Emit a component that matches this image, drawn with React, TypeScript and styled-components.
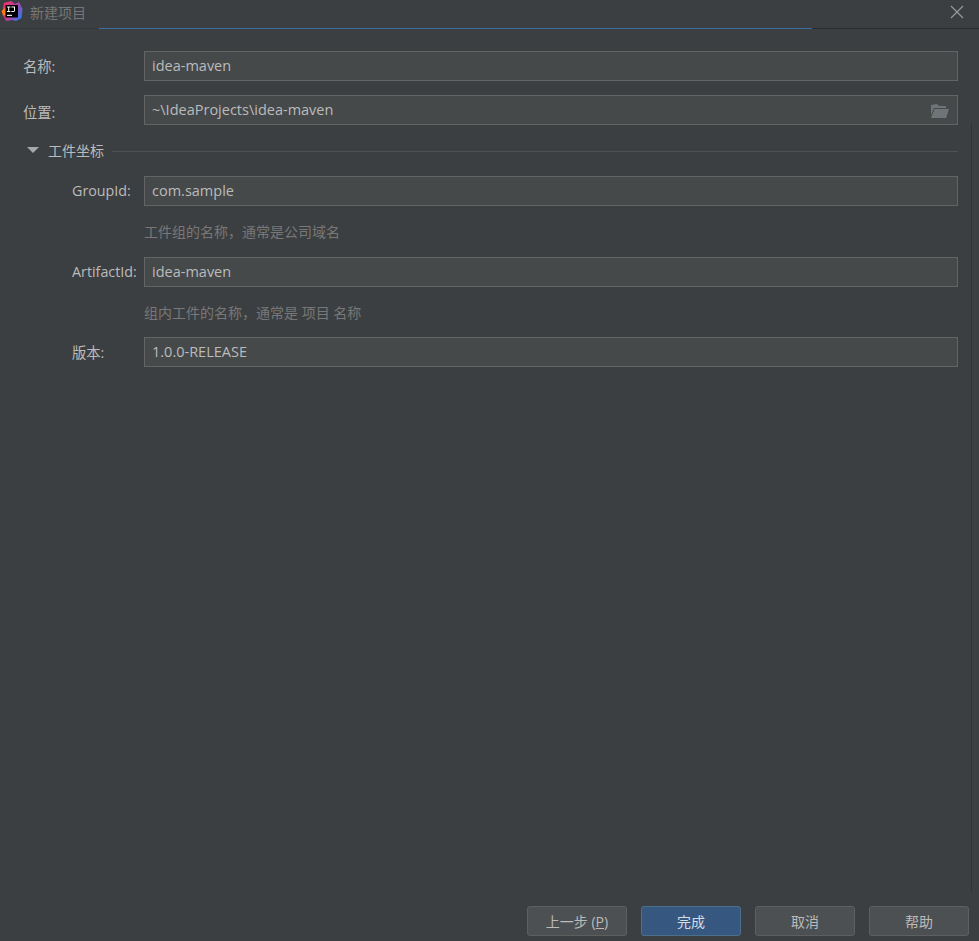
import styled, { createGlobalStyle } from 'styled-components';

const GlobalStyle = createGlobalStyle`
  html, body {
    margin: 0;
    padding: 0;
    background: #3c3f41;
  }
  * {
    box-sizing: border-box;
  }
`;

const FONT = `'Open Sans', 'Noto Sans', 'Noto Sans CJK SC', sans-serif`;

const Dialog = styled.div`
  position: relative;
  display: flex;
  flex-direction: column;
  width: 979px;
  height: 941px;
  overflow: hidden;
  background: #3c3f41;
  color: #bbbbbb;
  font-family: ${FONT};
  font-size: 14.5px;
`;

const TitleBar = styled.header`
  display: flex;
  align-items: center;
  justify-content: space-between;
  flex: none;
  height: 28px;
  padding: 0 15px 4px 1px;
`;

const TitleGroup = styled.div`
  display: flex;
  align-items: center;
  gap: 7px;
`;

const TitleText = styled.span`
  font-size: 14px;
  color: #767676;
`;

const Progress = styled.div`
  flex: none;
  display: grid;
  grid-template-columns: 99px 713px 1fr;
  height: 1px;
`;

const ProgressPart = styled.div<{ $color: string }>`
  background: ${({ $color }) => $color};
`;

const Body = styled.main`
  flex: 1;
  display: flex;
  flex-direction: column;
  padding: 22px 21px 0 23px;
`;

const Row = styled.div<{ $nested?: boolean; $gapAfter?: number }>`
  display: grid;
  grid-template-columns: ${({ $nested }) => ($nested ? '72px' : '121px')} 1fr;
  align-items: center;
  height: 30px;
  margin-left: ${({ $nested }) => ($nested ? '49px' : '0')};
  margin-bottom: ${({ $gapAfter }) => $gapAfter ?? 0}px;
`;

const Label = styled.label<{ $low?: boolean }>`
  padding: ${({ $low }) => ($low ? '3px 0 0' : '0 0 2px')};
  font-size: 14.3px;
  color: #bbbbbb;
  white-space: nowrap;
`;

const Field = styled.div`
  position: relative;
  display: flex;
  align-items: center;
  height: 30px;
  padding: 0 7px 2px;
  background: #45494a;
  border: 1px solid #646464;
  color: #bbbbbb;
`;

const FolderButton = styled.span`
  position: absolute;
  right: 7px;
  top: 7px;
  display: flex;
`;

const SectionHeader = styled.div`
  display: flex;
  align-items: center;
  height: 20px;
  margin: 16px 0 15px 4px;
`;

const Caret = styled.span`
  width: 0;
  height: 0;
  margin: 0 9px 2px 0;
  border-left: 6px solid transparent;
  border-right: 6px solid transparent;
  border-top: 6px solid #a8a8a8;
`;

const SectionTitle = styled.span`
  margin: 0 8px 2px 0;
  font-size: 14px;
`;

const SectionLine = styled.div`
  flex: 1;
  height: 1px;
  background: #515151;
`;

const Hint = styled.p<{ $height: number }>`
  height: ${({ $height }) => $height}px;
  margin: 0 0 0 121px;
  padding-top: 16px;
  font-size: 14px;
  line-height: 20px;
  color: #787878;
`;

const ScrollLine = styled.div`
  position: absolute;
  left: 971px;
  top: 123px;
  height: 769px;
  width: 1px;
  background: #323232;
`;

const Footer = styled.footer`
  flex: none;
  display: flex;
  justify-content: flex-end;
  gap: 14px;
  padding: 0 10px 5px 0;
`;

const Button = styled.button<{ $primary?: boolean }>`
  width: 100px;
  height: 30px;
  padding: 0 0 1px;
  border-radius: 3px;
  border: 1px solid ${({ $primary }) => ($primary ? '#4c708c' : '#5e6060')};
  background: ${({ $primary }) => ($primary ? '#365880' : '#4c5052')};
  color: ${({ $primary }) => ($primary ? '#d5dbe2' : '#bbbbbb')};
  font-family: ${FONT};
  font-size: 14px;
`;

const Mnemonic = styled.span`
  text-decoration: underline;
`;

const CloseIcon = () => (
  <svg width="14" height="14" viewBox="0 0 14 14" fill="none">
    <path d="M1 1 L13 13 M13 1 L1 13" stroke="#9c9c9c" strokeWidth="1.1" />
  </svg>
);

const FolderIcon = () => (
  <svg width="20" height="16" viewBox="0 0 20 16">
    <path d="M1 2 L7 1 L9 3 L16 3 L16 5 L4 5 L1 12 Z" fill="#6e7478" />
    <path d="M4.5 6 L19 6 L16 15 L1 15 Z" fill="#6e7478" />
  </svg>
);

const AppLogo = () => (
  <svg width="22" height="22" viewBox="0 0 22 22">
    <defs>
      <linearGradient id="logoEdge" x1="0" y1="0" x2="1" y2="0.6">
        <stop offset="0" stopColor="#fe315d" />
        <stop offset="0.55" stopColor="#c03a9e" />
        <stop offset="1" stopColor="#3c74e6" />
      </linearGradient>
    </defs>
    <path d="M3 2 L10 0 L14 3 L18 1 L21.5 8 L20.5 17 L15 20 L11 19 L5 20 L2 14 L2 7 Z" fill="url(#logoEdge)" />
    <path d="M0.5 10 L5 6 L5 14 L2 14.5 Z" fill="#f97a12" />
    <rect x="4.5" y="4" width="12.5" height="12.5" fill="#000000" />
    <rect x="6" y="13.8" width="5" height="1.1" fill="#ffffff" />
    <path d="M6 5.5 H9.4 V6.4 H8.2 V10 H9.4 V11 H6 V10 H7.2 V6.4 H6 Z" fill="#ffffff" />
    <path d="M10.4 5.5 H14 V9.6 Q14 11 12.6 11 H10.4 V10 H13 V6.4 H10.4 Z" fill="#ffffff" />
  </svg>
);

const App = () => (
  <Dialog>
    <GlobalStyle />
    <TitleBar>
      <TitleGroup>
        <AppLogo />
        <TitleText>新建项目</TitleText>
      </TitleGroup>
      <CloseIcon />
    </TitleBar>
    <Progress>
      <ProgressPart $color="#35383a" />
      <ProgressPart $color="#3b6e9e" />
      <ProgressPart $color="#2b2b2b" />
    </Progress>
    <Body>
      <Row $gapAfter={14}>
        <Label>名称:</Label>
        <Field>idea-maven</Field>
      </Row>
      <Row>
        <Label $low>位置:</Label>
        <Field>
          ~\IdeaProjects\idea-maven
          <FolderButton>
            <FolderIcon />
          </FolderButton>
        </Field>
      </Row>
      <SectionHeader>
        <Caret />
        <SectionTitle>工件坐标</SectionTitle>
        <SectionLine />
      </SectionHeader>
      <Row $nested>
        <Label>GroupId:</Label>
        <Field>com.sample</Field>
      </Row>
      <Hint $height={51}>工件组的名称，通常是公司域名</Hint>
      <Row $nested>
        <Label>ArtifactId:</Label>
        <Field>idea-maven</Field>
      </Row>
      <Hint $height={50}>组内工件的名称，通常是 项目 名称</Hint>
      <Row $nested>
        <Label>版本:</Label>
        <Field>1.0.0-RELEASE</Field>
      </Row>
    </Body>
    <ScrollLine />
    <Footer>
      <Button>
        上一步 (<Mnemonic>P</Mnemonic>)
      </Button>
      <Button $primary>完成</Button>
      <Button>取消</Button>
      <Button>帮助</Button>
    </Footer>
  </Dialog>
);

export default App;
